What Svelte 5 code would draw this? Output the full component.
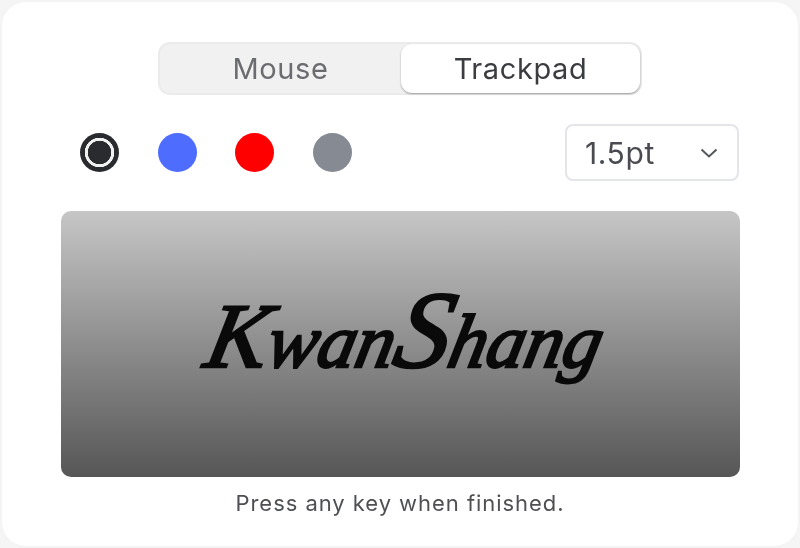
<script>
  const colors = ['#2a2b2f', '#4e6dff', '#ff0000', '#868a93'];
  let selected = $state(0);
  let mode = $state('Trackpad');
</script>

<div class="card">
  <div class="segmented">
    {#each ['Mouse', 'Trackpad'] as m}
      <button class="seg" class:active={mode === m} onclick={() => (mode = m)}>{m}</button>
    {/each}
  </div>

  <div class="tools">
    <div class="swatches">
      {#each colors as c, i}
        <button
          class="swatch"
          class:selected={selected === i}
          style="--c: {c}"
          aria-label="color {i + 1}"
          onclick={() => (selected = i)}
        ></button>
      {/each}
    </div>
    <div class="select">
      <span>1.5pt</span>
      <svg width="18" height="10" viewBox="0 0 18 10" fill="none">
        <path d="M1.5 1.5 L9 8.5 L16.5 1.5" stroke="#55575c" stroke-width="2" />
      </svg>
    </div>
  </div>

  <div class="pad">
    <div class="signature"><span class="cap">K</span>wan<span class="cap tall">S</span>hang</div>
  </div>

  <p class="hint">Press any key when finished.</p>
</div>

<style>
  :global(body) {
    margin: 0;
    background: #f5f5f5;
  }

  .card {
    box-sizing: border-box;
    width: 800px;
    height: 548px;
    background: #fff;
    border: 2px solid #f4f4f4;
    border-radius: 26px;
    padding: 40px 59px 0;
    display: flex;
    flex-direction: column;
    align-items: center;
    font-family: Inter, 'Liberation Sans', sans-serif;
    filter: blur(0.7px);
  }

  .segmented {
    box-sizing: border-box;
    width: 484px;
    height: 53px;
    display: flex;
    background: #f1f1f1;
    border: 2px solid #ebebeb;
    border-radius: 12px;
  }

  .seg {
    flex: 1;
    border: none;
    background: none;
    padding: 0;
    font: inherit;
    font-size: 29px;
    letter-spacing: 0.6px;
    color: #6b6c70;
    border-radius: 11px;
  }

  .seg.active {
    flex: none;
    width: 239px;
    background: #fff;
    color: #3b3c40;
    box-shadow: 0 1px 2px rgba(0, 0, 0, 0.35);
  }

  .tools {
    width: 100%;
    display: flex;
    align-items: center;
    justify-content: space-between;
    margin-top: 29px;
  }

  .swatches {
    display: flex;
    gap: 38.6px;
    padding-left: 19px;
  }

  .swatch {
    box-sizing: border-box;
    width: 39px;
    height: 39px;
    padding: 0;
    border: none;
    border-radius: 50%;
    background: var(--c);
  }

  .swatch.selected {
    background: radial-gradient(circle, var(--c) 0 11.5px, #f0f0f0 12px 14.5px, var(--c) 15px);
  }

  .select {
    box-sizing: border-box;
    width: 174px;
    height: 57px;
    display: flex;
    align-items: center;
    justify-content: space-between;
    padding: 0 19px 0 18px;
    border: 2px solid #e4e5e9;
    border-radius: 8px;
    font-size: 30px;
    letter-spacing: 0.6px;
    color: #4a4b50;
  }

  .pad {
    box-sizing: border-box;
    width: 679px;
    height: 266px;
    flex: none;
    margin-top: 30px;
    border-radius: 10px;
    background: linear-gradient(#c6c6c6, #565656);
    display: flex;
    align-items: center;
    justify-content: center;
  }

  .signature {
    font-family: 'Liberation Serif', serif;
    font-style: italic;
    font-size: 76px;
    line-height: 1;
    letter-spacing: 0;
    color: #0a0a0a;
    -webkit-text-stroke: 2.5px #0a0a0a;
    white-space: nowrap;
    padding: 0 0 28px 10px;
    transform: skewX(-12deg);
  }

  .cap {
    font-size: 92px;
    line-height: 1;
  }

  .cap.tall {
    font-size: 110px;
  }

  .hint {
    margin: 13px 0 0;
    font-size: 22px;
    line-height: 26px;
    letter-spacing: 0.95px;
    color: #4f5054;
  }
</style>
